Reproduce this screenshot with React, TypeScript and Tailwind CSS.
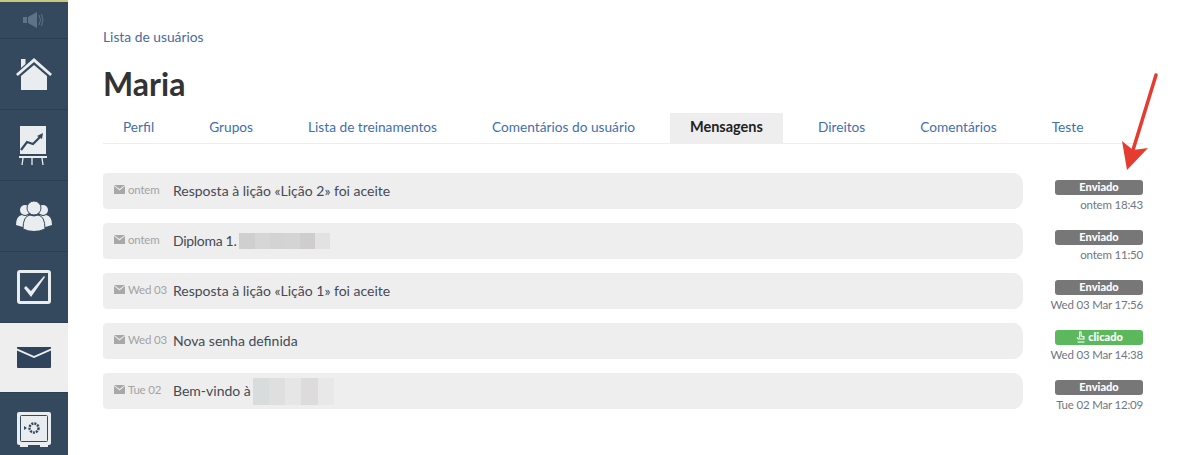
import type { ReactNode } from "react";

const tabs = [
  "Perfil",
  "Grupos",
  "Lista de treinamentos",
  "Comentários do usuário",
  "Mensagens",
  "Direitos",
  "Comentários",
  "Teste",
];

function MailIcon() {
  return (
    <svg width="11" height="9" viewBox="0 0 11 9" className="shrink-0">
      <path d="M0 0h11L5.500 4z" fill="#a8a8a8" />
      <path d="M0 1v8h11V1L5.500 5.400z" fill="#a8a8a8" />
    </svg>
  );
}

function Blur({ colors, className }: { colors: string[]; className: string }) {
  return (
    <div className={`flex ${className}`}>
      {colors.map((c, i) => (
        <div key={i} className="h-full flex-1" style={{ backgroundColor: c }} />
      ))}
    </div>
  );
}

function Row({ date, children }: { date: string; children: ReactNode }) {
  return (
    <div className="flex h-9 items-center rounded-r-[10px] rounded-l-[4px] bg-[#eeeeee] pl-[11px]">
      <div className="flex w-[59px] items-center gap-[3px] pb-[3px] text-[11.5px] tracking-[-0.2px] text-[#a3a3a3]">
        <MailIcon />
        <span>{date}</span>
      </div>
      <div className="flex items-center text-[14px] text-[#444a55]">{children}</div>
    </div>
  );
}

function Status({ label, time, clicked }: { label: string; time: string; clicked?: boolean }) {
  return (
    <div className="flex h-9 w-[88px] flex-col items-end pt-[7px]">
      <div
        className={`flex h-[15px] w-full items-center justify-center gap-[2px] rounded-[3px] text-[11px] font-black text-white ${
          clicked ? "bg-[#5cb85c]" : "bg-[#777777]"
        }`}
      >
        {clicked && (
          <svg width="11" height="13" viewBox="0 0 11 13" fill="none" stroke="white" strokeWidth="1.1">
            <path d="M4.500 7V1.600a.8.8 0 0 1 1.600 0v3.400l2.900.7v2.300H3.400L2 6.300" />
            <path d="M2.500 11h7" />
          </svg>
        )}
        {label}
      </div>
      <div className="mt-[2px] whitespace-nowrap text-[11.5px] leading-[16px] tracking-[-0.2px] text-[#70767f]">{time}</div>
    </div>
  );
}

function SideItem({ h, active, children }: { h: string; active?: boolean; children: ReactNode }) {
  return (
    <div
      className={`flex w-full shrink-0 items-center justify-center border-b ${h} ${
        active ? "border-[#2c3e52] bg-[#eeeeee]" : "border-[#2c3e52] bg-[#34495e]"
      }`}
    >
      {children}
    </div>
  );
}

function Sidebar() {
  return (
    <div className="flex h-[455px] w-[68px] shrink-0 flex-col overflow-hidden bg-[#34495e]">
      <div className="h-[2px] w-full shrink-0 bg-[#c9c77a]" />
      <SideItem h="h-[37px]">
        <svg width="22" height="16" viewBox="0 0 22 16" fill="#5f7387">
          <path d="M0 5h4v6H0zM5 5l9-5v16l-9-5z" />
          <path d="M16 3q3 5 0 10M18.500 2q3 6 0 12" fill="none" stroke="#5f7387" />
        </svg>
      </SideItem>
      <SideItem h="h-[71px]">
        <svg width="36" height="34" viewBox="0 0 36 34">
          <path d="M5 2h4.500v5L5 11z" fill="#e9edf0" />
          <path d="M18 1 36 17l-1.800 2L18 5 1.800 19 0 17z" fill="#e9edf0" />
          <path d="M18 8 31 19v14H5V19z" fill="#e9edf0" />
        </svg>
      </SideItem>
      <SideItem h="h-[71px]">
        <svg width="28" height="39" viewBox="0 0 28 39" className="mr-[2px]">
          <path d="M1 0h26v28H1z" fill="#e9edf0" />
          <path d="M0 30h28v2H0z" fill="#e9edf0" />
          <path d="M2 24 8 16l6 2 7-7" fill="none" stroke="#34495e" strokeWidth="2.200" />
          <path d="M18 10l6-3-1 6z" fill="#34495e" />
          <path d="M3 39 4 32M13 39V32M24 39l-1-7" stroke="#e9edf0" strokeWidth="1.300" />
        </svg>
      </SideItem>
      <SideItem h="h-[71px]">
        <svg width="36" height="30" viewBox="0 0 36 30" fill="#e9edf0">
          <circle cx="9" cy="9" r="5" />
          <circle cx="27" cy="9" r="5" />
          <path d="M0 24q0-9 6-10 3 2 6 0l2 2-4 11z" />
          <path d="M36 24q0-9-6-10-3 2-6 0l-2 2 4 11z" />
          <circle cx="18" cy="7" r="7" stroke="#34495e" />
          <path d="M7 28q0-13 7-14 4 2 8 0 7 1 7 14-11 5-22 0z" stroke="#34495e" />
        </svg>
      </SideItem>
      <SideItem h="h-[71px]">
        <svg width="34" height="34" viewBox="0 0 34 34">
          <rect x="1.500" y="1.500" width="31" height="31" rx="1.500" fill="#34495e" stroke="#e9edf0" strokeWidth="3" />
          <path d="M7 18l2-2 5 5L27 6l1 1-14 20z" fill="#e9edf0" />
        </svg>
      </SideItem>
      <SideItem h="h-[70px]" active>
        <svg width="34" height="21" viewBox="0 0 34 21" fill="#2f445c">
          <path d="M0 1.500 17 9 34 1.500V0H0z" />
          <path d="M0 3.500V20a1 1 0 0 0 1 1h32a1 1 0 0 0 1-1V3.500L17 11z" />
        </svg>
      </SideItem>
      <div className="flex flex-1 items-start justify-center pt-[19px]">
        <svg width="34" height="35" viewBox="0 0 34 35">
          <rect width="34" height="33" rx="2" fill="#e9edf0" />
          <path d="M3 33h8v2H3zM23 33h8v2h-8z" fill="#e9edf0" />
          <rect x="3.500" y="3.500" width="27" height="26" rx="1" fill="none" stroke="#34495e" />
          <circle cx="17" cy="16" r="4.500" fill="none" stroke="#34495e" strokeWidth="2.500" strokeDasharray="2 1" />
          <path d="M7 14l3 2-3 2z" fill="#34495e" />
        </svg>
      </div>
    </div>
  );
}

export default function App() {
  return (
    <div className="relative flex h-[455px] w-[1197px] overflow-hidden bg-white font-['Lato','Liberation_Sans',sans-serif]">
      <Sidebar />
      <div className="w-[1075px] pl-[35px]">
        <a className="mt-[28px] block text-[13.800px] leading-[18px] text-[#4a6a9c]">Lista de usuários</a>
        <h1 className="mt-[18px] text-[32px] leading-[40px] font-bold text-[#333333]">Maria</h1>
        <div className="mt-[9px] flex h-[31px] w-[1040px] gap-[15px] border-b border-[#eeeeee]">
          {tabs.map((t) =>
            t === "Mensagens" ? (
              <div key={t} className="flex h-[30px] items-center bg-[#eeeeee] px-5 pb-[2px] text-[14.500px] font-bold text-[#222222]">
                {t}
              </div>
            ) : (
              <div key={t} className="flex h-[30px] items-center px-5 pb-[2px] text-[13.700px] text-[#3f6fae]">
                {t}
              </div>
            )
          )}
        </div>
        <div className="mt-[29px] grid grid-cols-[920px_88px] justify-between gap-y-[14px]">
          <Row date="ontem"><span className="pb-[2px]">Resposta à lição «Lição 2» foi aceite</span></Row>
          <Status label="Enviado" time="ontem 18:43" />
          <Row date="ontem">
            <span className="pb-[2px] tracking-[-0.3px]">Diploma 1.</span>
            <Blur
              className="ml-[3px] h-4 w-[91px]"
              colors={["#cfcfcf", "#d6d6d6", "#d3d3d3", "#d4d4d4", "#cfcdcd", "#e2e2e2"]}
            />
          </Row>
          <Status label="Enviado" time="ontem 11:50" />
          <Row date="Wed 03"><span className="pb-[2px]">Resposta à lição «Lição 1» foi aceite</span></Row>
          <Status label="Enviado" time="Wed 03 Mar 17:56" />
          <Row date="Wed 03"><span className="pb-[2px]">Nova senha definida</span></Row>
          <Status label="clicado" time="Wed 03 Mar 14:38" clicked />
          <Row date="Tue 02">
            <span className="pb-[2px]">Bem-vindo à</span>
            <Blur
              className="ml-[2px] h-[27px] w-[81px]"
              colors={["#d8dcdc", "#dfdfdf", "#e6e6e6", "#dddbdb", "#e8e8e8"]}
            />
          </Row>
          <Status label="Enviado" time="Tue 02 Mar 12:09" />
        </div>
      </div>
      {/* red annotation arrow */}
      <svg width="60" height="110" viewBox="0 0 60 110" className="absolute top-[70px] left-[1110px]">
        <path d="M46 5 23 80" stroke="#e63c30" strokeWidth="3.500" strokeLinecap="round" />
        <path d="M17 100 12 71 23 80 38 78z" fill="#e63c30" />
      </svg>
    </div>
  );
}
